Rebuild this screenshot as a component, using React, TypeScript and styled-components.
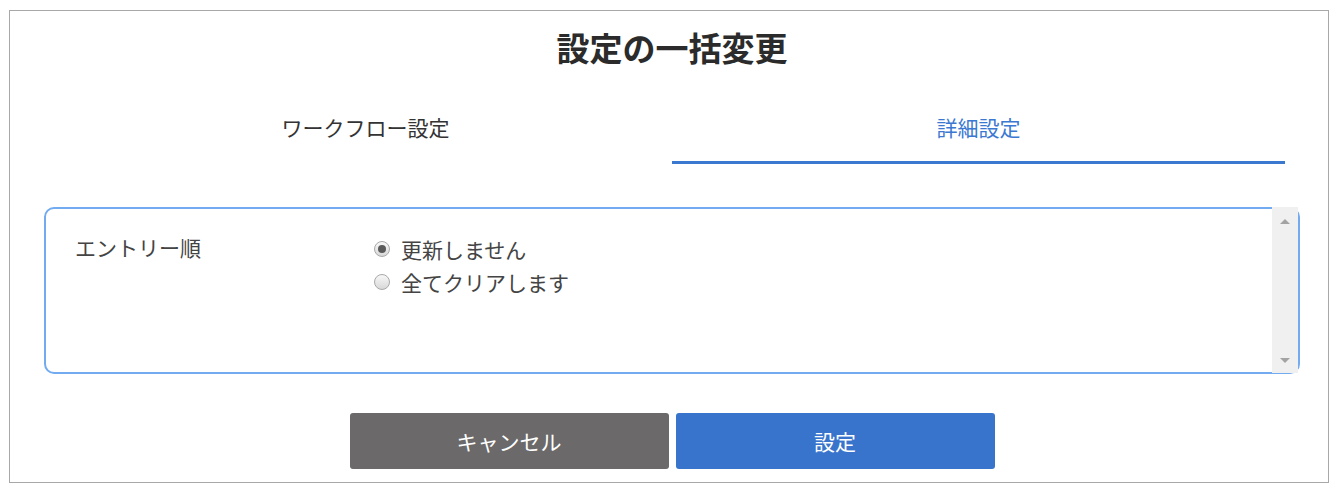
import React, { useState } from "react";
import styled, { createGlobalStyle } from "styled-components";

const GlobalStyle = createGlobalStyle`
	html, body {
		margin: 0;
		padding: 0;
		background: #ffffff;
	}
	body {
		font-family: "Noto Sans CJK JP", "Noto Sans", sans-serif;
		color: #333333;
	}
`;

const Frame = styled.div`
	box-sizing: border-box;
	width: 1320px;
	height: 473px;
	margin: 10px 0 0 9px;
	border: 1px solid #a8a8a8;
	padding: 0 28px 0 34px;
	display: flex;
	flex-direction: column;
	background: #ffffff;
`;

const Title = styled.h1`
	margin: 14px 0 0;
	font-size: 33px;
	line-height: 44px;
	font-weight: 700;
	text-align: center;
	color: #2b2b2b;
`;

const Tabs = styled.div`
	display: grid;
	grid-template-columns: 1fr 1fr;
	margin: 24px 15px 0;
`;

const Tab = styled.button<{ $active?: boolean }>`
	height: 71px;
	padding: 0;
	border: none;
	border-bottom: 3px solid ${({ $active }) => ($active ? "#3b78cf" : "transparent")};
	background: none;
	font-family: inherit;
	font-size: 21px;
	color: ${({ $active }) => ($active ? "#3a78d2" : "#333333")};
	cursor: pointer;
`;

const SettingsBox = styled.div`
	box-sizing: border-box;
	height: 167px;
	margin-top: 43px;
	border: 2px solid #72abef;
	border-radius: 10px;
	display: flex;
`;

const SettingsBody = styled.div`
	flex: 1;
	padding: 23px 29px;
`;

const SettingRow = styled.div`
	display: grid;
	grid-template-columns: 299px 1fr;
	font-size: 21px;
	color: #444444;
`;

const SettingLabel = styled.div`
	line-height: 33px;
	margin-top: -1px;
`;

const RadioList = styled.div`
	display: flex;
	flex-direction: column;
`;

const RadioOption = styled.label`
	display: flex;
	align-items: center;
	gap: 11px;
	height: 33px;
	cursor: pointer;
`;

const RadioDot = styled.span<{ $checked?: boolean }>`
	box-sizing: border-box;
	width: 16px;
	height: 16px;
	border-radius: 50%;
	border: 1px solid #a8a8a8;
	background: linear-gradient(#f8f8f8, #d8d8d8);
	display: grid;
	place-items: center;
	&::after {
		content: "";
		width: 8px;
		height: 8px;
		border-radius: 50%;
		background: #5a5a5a;
		display: ${({ $checked }) => ($checked ? "block" : "none")};
	}
`;

const ScrollTrack = styled.div`
	width: 26px;
	margin: -2px 0 -1px;
	background: #f0f0f0;
	display: flex;
	flex-direction: column;
	justify-content: space-between;
	align-items: center;
	padding: 12px 0 10px;
`;

const Arrow = styled.span<{ $down?: boolean }>`
	width: 0;
	height: 0;
	border-left: 5px solid transparent;
	border-right: 5px solid transparent;
	${({ $down }) =>
		$down ? "border-top: 5px solid #a3a3a3;" : "border-bottom: 5px solid #a3a3a3;"}
`;

const ButtonRow = styled.div`
	display: flex;
	justify-content: center;
	gap: 7px;
	margin-top: 39px;
`;

const ActionButton = styled.button<{ $primary?: boolean }>`
	width: 319px;
	height: 56px;
	border: none;
	border-radius: 3px;
	background: ${({ $primary }) => ($primary ? "#3874cc" : "#6b6969")};
	color: #ffffff;
	font-family: inherit;
	font-size: 21px;
	cursor: pointer;
`;

const options = ["更新しません", "全てクリアします"];

export default function App() {
	const [tab, setTab] = useState(1);
	const [choice, setChoice] = useState(0);

	return (
		<>
			<GlobalStyle />
			<Frame>
				<Title>設定の一括変更</Title>
				<Tabs>
					<Tab $active={tab === 0} onClick={() => setTab(0)}>
						ワークフロー設定
					</Tab>
					<Tab $active={tab === 1} onClick={() => setTab(1)}>
						詳細設定
					</Tab>
				</Tabs>

				<SettingsBox>
					<SettingsBody>
						<SettingRow>
							<SettingLabel>エントリー順</SettingLabel>
							<RadioList>
								{options.map((opt, i) => (
									<RadioOption key={opt} onClick={() => setChoice(i)}>
										<RadioDot $checked={choice === i} />
										{opt}
									</RadioOption>
								))}
							</RadioList>
						</SettingRow>
					</SettingsBody>
					<ScrollTrack>
						<Arrow />
						<Arrow $down />
					</ScrollTrack>
				</SettingsBox>

				<ButtonRow>
					<ActionButton>キャンセル</ActionButton>
					<ActionButton $primary>設定</ActionButton>
				</ButtonRow>
			</Frame>
		</>
	);
}
